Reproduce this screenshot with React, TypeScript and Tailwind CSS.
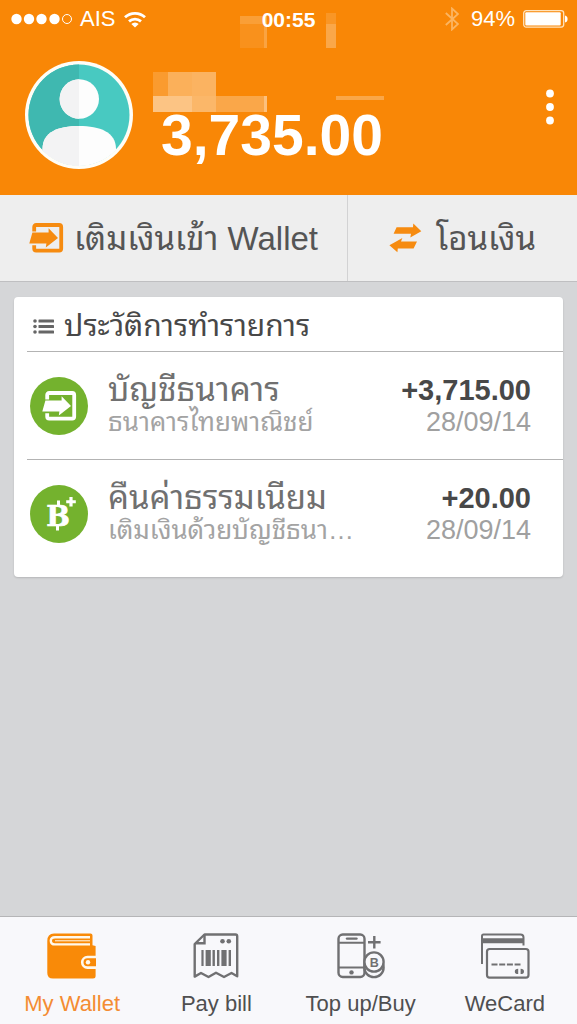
import type { ReactNode } from "react";

const fontStack = "font-['Liberation_Sans','Noto_Sans_Thai_Looped','Loma','Noto_Sans_Thai','Noto_Sans',sans-serif]";

function StatusBar() {
  return (
    <div className="relative flex h-[38px] items-center justify-between pl-[11px] pr-[9px] text-[22px] leading-none">
      <div className="flex items-center gap-2">
        <svg width="61" height="12" viewBox="0 0 61 12" fill="#fff" aria-hidden="true">
          <circle cx="5.5" cy="6" r="5.2" />
          <circle cx="18" cy="6" r="5.2" />
          <circle cx="30.5" cy="6" r="5.2" />
          <circle cx="43.5" cy="6" r="5.2" />
          <circle cx="56" cy="6" r="4.5" fill="none" stroke="#fff" strokeWidth="1" />
        </svg>
        <span>AIS</span>
        <svg className="ml-px" width="22" height="17" viewBox="0 0 22 17" fill="none" stroke="#fff" strokeWidth="2.8" aria-hidden="true">
          <path d="M1 6.3A14.5 14.5 0 0 1 21 6.3" />
          <path d="M5 10.4A9 9 0 0 1 17 10.4" />
          <path d="M11 16.6L7.3 12.9A5.3 5.3 0 0 1 14.7 12.9Z" fill="#fff" stroke="none" />
        </svg>
      </div>
      <span className="absolute left-1/2 -translate-x-1/2 text-[21px] font-bold">00:55</span>
      <div className="flex items-center gap-2">
        <svg className="mr-1" width="14" height="24" viewBox="0 0 14 24" fill="none" stroke="#fbb562" strokeWidth="1.8" aria-hidden="true">
          <path d="M.8 6L13 17L7 22.5V1.5L13 7L.8 18" />
        </svg>
        <span>94%</span>
        <svg width="45" height="18" viewBox="0 0 45 18" aria-hidden="true">
          <rect x=".7" y=".7" width="40" height="16.4" rx="2.5" fill="none" stroke="#ffe3bd" strokeWidth="1.3" />
          <rect x="2.3" y="2.3" width="35.4" height="13.2" rx="1" fill="#fff" />
          <path d="M42 5.5Q44.6 6 44.6 9T42 12.5Z" fill="#fff" />
        </svg>
      </div>
    </div>
  );
}

function MaskedName() {
  return (
    <svg className="pointer-events-none absolute left-0 top-0" width="400" height="120" viewBox="0 0 400 120" fill="#fff" shapeRendering="crispEdges" aria-hidden="true">
      <rect x="240" y="16" width="24" height="8" opacity=".2" />
      <rect x="240" y="24" width="24" height="24" opacity=".09" />
      <rect x="264" y="16" width="3" height="32" opacity=".24" />
      <rect x="326" y="13" width="10" height="11" opacity=".13" />
      <rect x="326" y="24" width="10" height="24" opacity=".27" />
      <rect x="153" y="72" width="15" height="24" opacity=".17" />
      <rect x="168" y="72" width="24" height="24" opacity=".34" />
      <rect x="192" y="72" width="24" height="24" opacity=".37" />
      <rect x="153" y="96" width="39" height="16" opacity=".51" />
      <rect x="192" y="96" width="24" height="16" opacity=".4" />
      <rect x="216" y="96" width="48" height="16" opacity=".27" />
      <rect x="264" y="96" width="3" height="16" opacity=".48" />
      <rect x="336" y="96" width="48" height="4" opacity=".27" />
    </svg>
  );
}

function Avatar() {
  return (
    <svg width="108" height="108" viewBox="0 0 108 108" role="img" aria-label="Profile">
      <defs>
        <clipPath id="disc">
          <circle cx="54" cy="54" r="51" />
        </clipPath>
        <clipPath id="leftHalf">
          <rect width="54" height="108" />
        </clipPath>
      </defs>
      <circle cx="54" cy="54" r="54" fill="#fffdf6" />
      <circle cx="54" cy="54" r="50.5" fill="#48c9c1" />
      <path d="M54 3.5A50.5 50.5 0 0 0 54 104.5Z" fill="#3fb8b0" />
      <g clipPath="url(#disc)">
        <g fill="#fdfdfd">
          <circle cx="54.3" cy="38" r="19.7" />
          <path d="M17.5 108V88C17.5 71 33 65 54 65S91 71 91 88V108Z" />
        </g>
        <g fill="#f3f3f4" clipPath="url(#leftHalf)">
          <circle cx="54.3" cy="38" r="19.7" />
          <path d="M17.5 108V88C17.5 71 33 65 54 65S91 71 91 88V108Z" />
        </g>
      </g>
    </svg>
  );
}

function EnterIcon({ className }: { className?: string }) {
  return (
    <svg className={className} width="35" height="30" viewBox="0 0 35 30" aria-hidden="true">
      <path d="M5.2 8.4V4Q5.2 2 7.2 2H30.2Q32.2 2 32.2 4V25.6Q32.2 27.6 30.2 27.6H7.2Q5.2 27.6 5.2 25.6V22.2" fill="none" stroke="currentColor" strokeWidth="3.8" />
      <path d="M3.4 9.4H19.6V5.2L29 15L16.8 24.6L17.4 20.6H.3Z" fill="currentColor" />
    </svg>
  );
}

function TransferIcon() {
  return (
    <svg width="33" height="30" viewBox="0 0 33 30" fill="#f68b10" aria-hidden="true">
      <path d="M7.6 4.2H24L24.3 .4L32.3 8.2L21.3 14.4L22 10.8H4.6Z" />
      <path d="M13.4 15L12 18.6H28L24.6 25.6H8.8L8.4 29.2L.4 22.2Z" />
    </svg>
  );
}

function ListIcon() {
  return (
    <svg width="21" height="15" viewBox="0 0 21 15" fill="#666" aria-hidden="true">
      <circle cx="2" cy="2" r="1.8" />
      <circle cx="2" cy="7.5" r="1.8" />
      <circle cx="2" cy="13" r="1.8" />
      <rect x="5.5" y=".4" width="15.5" height="3.2" rx=".6" />
      <rect x="5.5" y="5.9" width="15.5" height="3.2" rx=".6" />
      <rect x="5.5" y="11.4" width="15.5" height="3.2" rx=".6" />
    </svg>
  );
}

function CoinIcon() {
  return (
    <svg width="58" height="58" viewBox="0 0 58 58" fill="#fff" aria-hidden="true">
      <text x="28" y="40.5" textAnchor="middle" fontFamily="DejaVu Serif" fontWeight="bold" fontSize="28" stroke="#fff" strokeWidth=".7">B</text>
      <rect x="27" y="15.5" width="3" height="6" />
      <rect x="26" y="39.5" width="3" height="6" />
      <path d="M39.4 12H42.6V15.2H45.8V18.2H42.6V21.4H39.4V18.2H36.2V15.2H39.4Z" />
    </svg>
  );
}

function WalletIcon() {
  return (
    <svg width="50" height="46" viewBox="0 0 50 46" aria-hidden="true">
      <path d="M7 .5H43.5Q45.5 .5 45.5 2.5V12.2L48.6 13V43Q48.6 45.5 46 45.5H6Q.3 45.5 .3 40V8Q.3 .5 7 .5Z" fill="#f98a08" />
      <path d="M43 4.2H8Q3.8 4.2 3.8 7.8T8 11.4H43" fill="none" stroke="#fff8ec" strokeWidth="2.4" />
      <path d="M8 7.8H43" stroke="#fff8ec" strokeWidth="1" />
      <path d="M49 24H40.5A5.3 5.3 0 0 0 40.5 34.6H49" fill="#f98a08" stroke="#fff8ec" strokeWidth="2.6" />
      <circle cx="41" cy="29.3" r="2.2" fill="#fff8ec" />
    </svg>
  );
}

function BillIcon() {
  return (
    <svg width="46" height="46" viewBox="0 0 46 46" fill="none" stroke="#707072" strokeWidth="2.4" aria-hidden="true">
      <path d="M11.5 1.5H42.5Q44.2 1.5 44.2 3.2V43.2L38.5 40L31 44L23 39.8L15.5 44L8 40L1.7 43.6V11Z" strokeLinejoin="round" />
      <path d="M11.5 1.5V10.2H2.2" />
      <g fill="#707072" stroke="none">
        <circle cx="29.5" cy="8.2" r="2.3" />
        <circle cx="35.8" cy="8.2" r="2.3" />
        <rect x="8.4" y="17" width="2.2" height="16" />
        <rect x="12.6" y="17" width="5.2" height="16" />
        <rect x="19.5" y="17" width="2.4" height="16" />
        <rect x="24" y="17" width="2.4" height="16" />
        <rect x="28.4" y="17" width="5.2" height="16" />
        <rect x="35.6" y="17" width="2.4" height="16" />
      </g>
    </svg>
  );
}

function TopUpIcon() {
  return (
    <svg width="48" height="46" viewBox="0 0 48 46" fill="none" stroke="#707072" strokeWidth="2.4" aria-hidden="true">
      <rect x="1.5" y="1.5" width="26" height="42.5" rx="4.2" />
      <path d="M1.5 9.8H27.5M1.5 34.6H27.5" strokeWidth="2" />
      <path d="M10 5.6H19.5" strokeLinecap="round" />
      <circle cx="14.5" cy="39.4" r="2.2" fill="#707072" stroke="none" />
      <path d="M37.3 3V15.4M31 9.2H43.6" />
      <circle cx="37" cy="34.5" r="9.6" fill="#f8f8fb" />
      <circle cx="37" cy="29" r="9.6" fill="#f8f8fb" />
      <text x="37.2" y="33.6" textAnchor="middle" fontFamily="Liberation Sans" fontWeight="bold" fontSize="12.5" fill="#707072" stroke="none">B</text>
    </svg>
  );
}

function CardsIcon() {
  return (
    <svg width="50" height="46" viewBox="0 0 50 46" fill="none" stroke="#707072" strokeWidth="2" aria-hidden="true">
      <path d="M2 31V3Q2 1.5 3.5 1.5H40.5Q43.5 1.5 43.5 4.5V12.5" />
      <path d="M2 7.8H43.5" strokeWidth="5" />
      <rect x="7" y="16" width="41.5" height="28.6" rx="2.6" strokeWidth="2.2" />
      <path d="M11.5 31.5H40.5" strokeDasharray="6 1.7" />
      <path d="M38.2 35.8V41Q34.8 41 34.8 38.4T38.2 35.8ZM40.6 35.8V41Q44 41 44 38.4T40.6 35.8Z" fill="#707072" stroke="none" />
    </svg>
  );
}

type Transaction = { title: string; detail: string; amount: string; date: string; icon: ReactNode };

const transactions: Transaction[] = [
  {
    title: "บัญชีธนาคาร",
    detail: "ธนาคารไทยพาณิชย์",
    amount: "+3,715.00",
    date: "28/09/14",
    icon: <EnterIcon />,
  },
  {
    title: "คืนค่าธรรมเนียม",
    detail: "เติมเงินด้วยบัญชีธนา…",
    amount: "+20.00",
    date: "28/09/14",
    icon: <CoinIcon />,
  },
];

const tabs = [
  { label: "My Wallet", icon: <WalletIcon />, active: true },
  { label: "Pay bill", icon: <BillIcon />, active: false },
  { label: "Top up/Buy", icon: <TopUpIcon />, active: false },
  { label: "WeCard", icon: <CardsIcon />, active: false },
];

export default function App() {
  return (
    <div className={`flex min-h-screen flex-col bg-[#d5d6d8] ${fontStack}`}>
      <header className="relative bg-[#f98706] pb-[26px] text-white">
        <StatusBar />
        <MaskedName />
        <div className="relative flex items-center pl-[25px] pr-4 pt-[23px]">
          <Avatar />
          <p className="ml-7 mt-10 flex-1 text-[57px] font-bold leading-none">3,735.00</p>
          <button type="button" aria-label="More options" className="-mt-4 px-[7px] py-2">
            <svg width="8" height="36" viewBox="0 0 8 36" fill="#fff" aria-hidden="true">
              <circle cx="4" cy="4.5" r="3.9" />
              <circle cx="4" cy="18" r="3.9" />
              <circle cx="4" cy="31.5" r="3.9" />
            </svg>
          </button>
        </div>
      </header>

      <div className="grid h-[87px] grid-cols-[38fr_25fr] border-b border-[#bfbfc1] bg-[#eee] text-[33px] leading-none text-[#555]">
        <button type="button" className="flex items-center justify-center gap-[10px] whitespace-nowrap border-r border-[#d2d2d3]">
          <EnterIcon className="text-[#f68b10]" />
          <span>เติมเงินเข้า Wallet</span>
        </button>
        <button type="button" className="flex items-center justify-center gap-[14px] whitespace-nowrap">
          <TransferIcon />
          <span>โอนเงิน</span>
        </button>
      </div>

      <main className="flex-1 px-[14px] pt-[15px]">
        <section className="rounded-[4px] bg-white pb-[10px] pl-[13px] shadow-[0_1px_2px_rgba(0,0,0,0.15)]">
          <h2 className="flex h-[54px] items-center gap-[10px] pl-[6px] pt-1 text-[30px] leading-none text-[#484848]">
            <ListIcon />
            <span>ประวัติการทำรายการ</span>
          </h2>
          <ul>
            {transactions.map((item) => (
              <li key={item.title} className="flex h-[108px] items-center border-t border-[#b3b3b3] pl-[3px] pr-8">
                <span className="flex size-[58px] shrink-0 items-center justify-center rounded-full bg-[#74b22e] text-white">
                  {item.icon}
                </span>
                <div className="ml-5 min-w-0 flex-1 whitespace-nowrap">
                  <p className="text-[33px] leading-8 text-[#707070]">{item.title}</p>
                  <p className="text-[26px] leading-8 text-[#a3a3a3]">{item.detail}</p>
                </div>
                <div className="text-right">
                  <p className="text-[29px] font-bold leading-8 text-[#484848]">{item.amount}</p>
                  <p className="text-[27px] leading-8 text-[#a0a0a0]">{item.date}</p>
                </div>
              </li>
            ))}
          </ul>
        </section>
      </main>

      <nav className="grid h-[108px] grid-cols-4 border-t border-[#b5b5b7] bg-[#f8f8fb]">
        {tabs.map((tab) => (
          <a
            key={tab.label}
            href="#"
            aria-current={tab.active ? "page" : undefined}
            className={`flex flex-col items-center gap-[13px] whitespace-nowrap pt-4 text-[22px] leading-6 ${tab.active ? "text-[#f48c32]" : "text-[#4f4f50]"}`}
          >
            {tab.icon}
            <span>{tab.label}</span>
          </a>
        ))}
      </nav>
    </div>
  );
}
